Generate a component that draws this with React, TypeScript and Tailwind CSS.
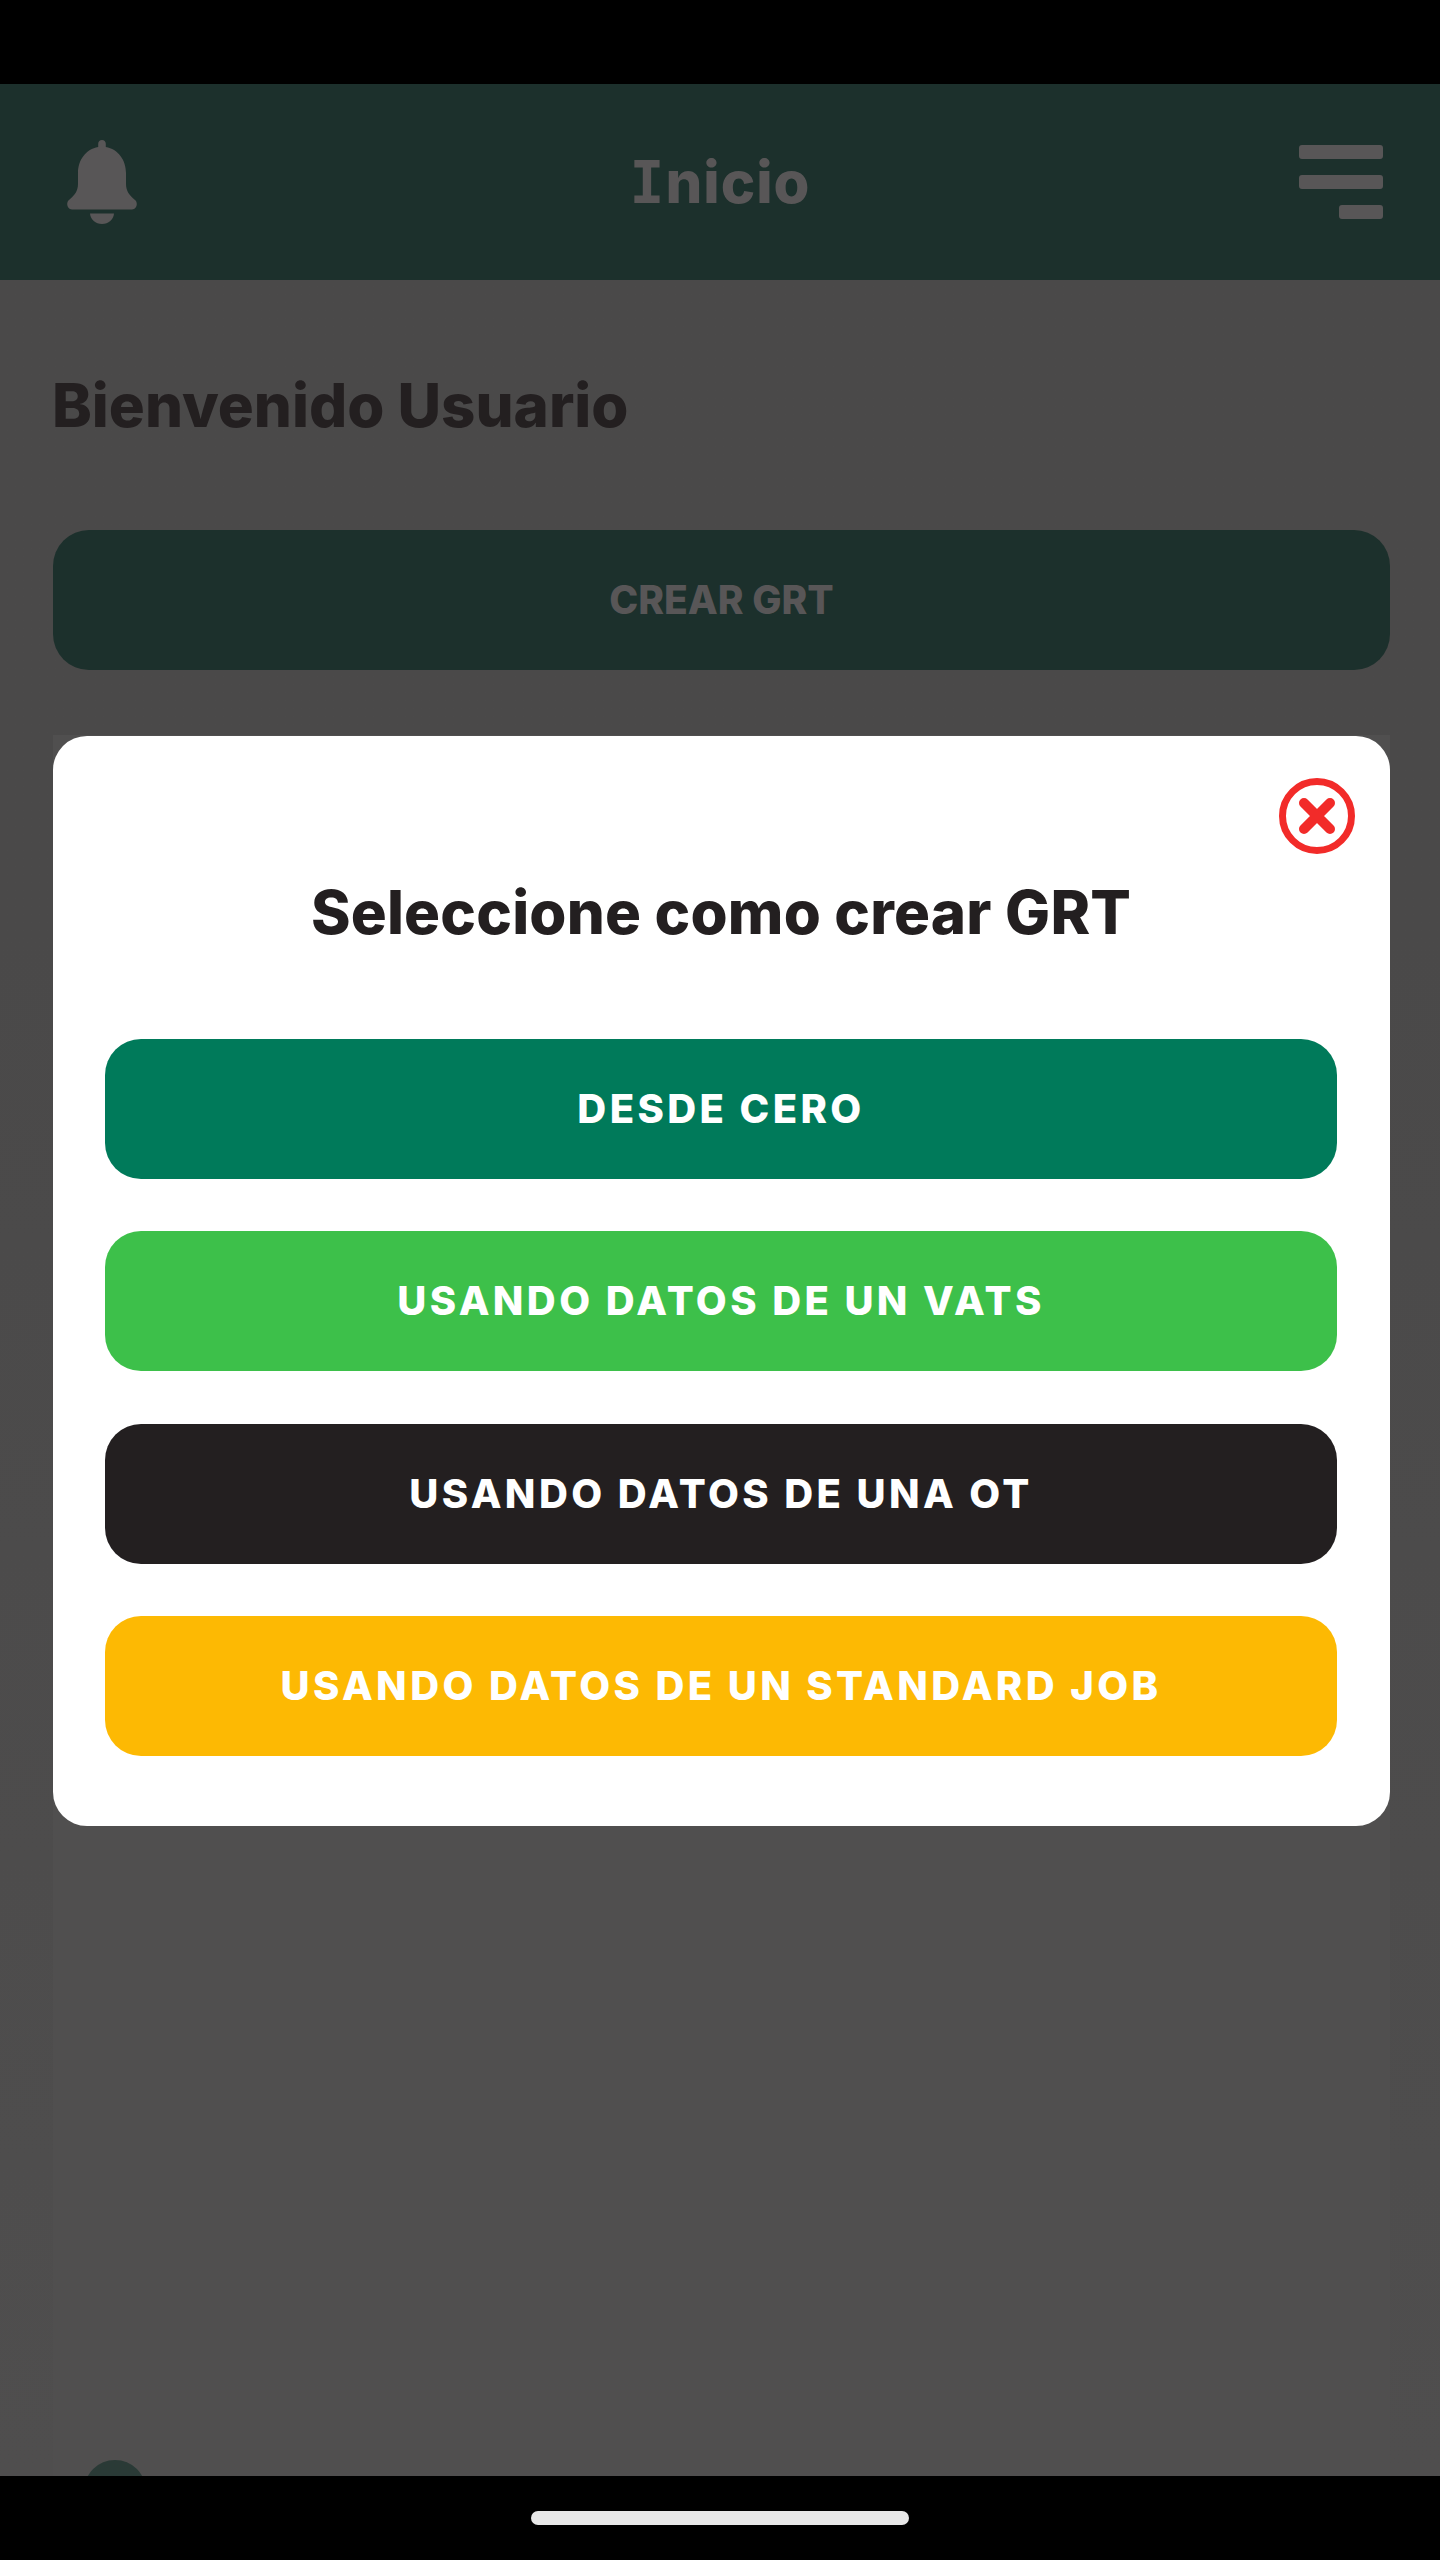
const options = [
  { label: "DESDE CERO", color: "bg-[#007a5a]" },
  { label: "USANDO DATOS DE UN VATS", color: "bg-[#3dc04a]" },
  { label: "USANDO DATOS DE UNA OT", color: "bg-[#231f20]" },
  { label: "USANDO DATOS DE UN STANDARD JOB", color: "bg-[#fdb903]" },
];

const BellIcon = () => (
  <svg viewBox="0 0 70 84" className="ml-[10px] h-[84px] w-[70px] fill-[#585657]">
    <path d="M35 0c2.200 0 3.800 1.600 3.800 3.800V7C51 9 59 20 59 33v11c0 7 3.500 11.500 9 16 3.500 3 1.500 9.500-3 9.500H5c-4.500 0-6.500-6.500-3-9.500C7.500 55.500 11 51 11 44V33C11 20 19 9 31.200 7V3.800C31.200 1.600 32.800 0 35 0z" />
    <path d="M23 73.500h24c-.5 6-5.500 10.500-12 10.500s-11.500-4.500-12-10.500z" />
  </svg>
);

const CloseIcon = () => (
  <svg viewBox="0 0 76 76" className="h-[76px] w-[76px]">
    <circle cx="38" cy="38" r="34.500" fill="none" stroke="#f22b29" strokeWidth="7" />
    <path d="M25 25l26 26M51 25L25 51" fill="none" stroke="#f22b29" strokeWidth="10" strokeLinecap="round" />
  </svg>
);

export default function App() {
  return (
    <div className="relative flex h-[2560px] w-[1440px] flex-col overflow-hidden bg-black font-['Inter',sans-serif]">
      <div className="h-[84px] shrink-0 bg-black" />

      <header className="grid h-[196px] shrink-0 grid-cols-[1fr_auto_1fr] items-center bg-[#1c302c] px-[57px]">
        <BellIcon />
        <h1 className="text-[58px] font-extrabold leading-none tracking-[1px] text-[#585657]">
          <span className="font-['DejaVu_Sans_Mono',monospace] font-bold">I</span>nicio
        </h1>
        <div className="flex w-[84px] flex-col items-end gap-[16px] justify-self-end">
          <span className="h-[14px] w-full rounded-[3px] bg-[#585657]" />
          <span className="h-[14px] w-full rounded-[3px] bg-[#585657]" />
          <span className="h-[14px] w-[44px] rounded-[3px] bg-[#585657]" />
        </div>
      </header>

      <main className="flex min-h-0 flex-1 flex-col overflow-hidden bg-gradient-to-b from-[#4a4949] via-[#4a4949] via-30% to-[#4f4e4e] pl-[53px] pr-[50px]">
        <h2 className="-ml-[1px] mt-[91px] text-[60px] font-extrabold leading-[68px] text-[#231f20]">Bienvenido Usuario</h2>
        <button className="mt-[91px] flex h-[140px] shrink-0 items-center justify-center rounded-[36px] bg-[#1c302c] text-[39px] font-extrabold text-[#585657]">
          CREAR GRT
        </button>
        <div className="relative mt-[65px] flex-1 overflow-hidden bg-[#504f4f]">
          <span className="absolute bottom-[-46px] left-[31px] h-[62px] w-[62px] rounded-full bg-[#2a3a36]" />
        </div>
      </main>

      <div className="flex h-[84px] shrink-0 items-start justify-center bg-black pt-[35px]">
        <span className="h-[14px] w-[378px] rounded-full bg-[#e8e8e8]" />
      </div>

      {/* Modal */}
      <div className="absolute left-[53px] top-[736px] flex h-[1090px] w-[1337px] flex-col rounded-[34px] bg-white pl-[52px] pr-[53px]">
        <div className="absolute right-[35px] top-[42px]">
          <CloseIcon />
        </div>
        <h3 className="mt-[140px] self-center text-[60px] font-extrabold leading-[72px] tracking-[0.2px] text-[#231f20]">Seleccione como crear GRT</h3>
        <div className="mt-[91px] flex flex-col gap-[52.4px]">
          {options.map((option) => (
            <button
              key={option.label}
              className={`flex h-[140px] items-center justify-center rounded-[36px] text-[40px] font-extrabold tracking-[3.4px] text-white ${option.color}`}
            >
              {option.label}
            </button>
          ))}
        </div>
      </div>
    </div>
  );
}
